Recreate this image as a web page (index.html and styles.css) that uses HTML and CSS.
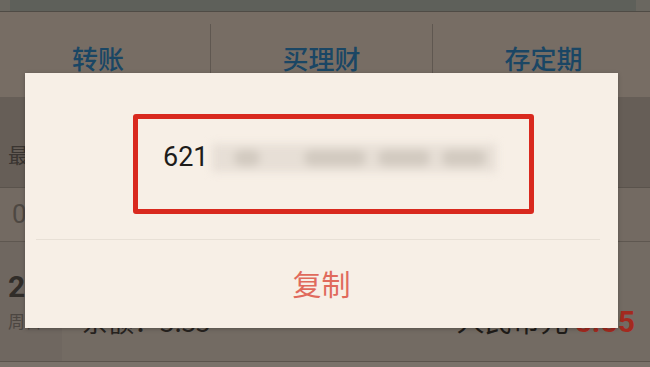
FILE: index.html
```html
<!DOCTYPE html>
<html lang="zh-CN">
<head>
<meta charset="utf-8">
<title>复制卡号</title>
<link rel="stylesheet" href="styles.css">
</head>
<body>
<div class="page">
  <div class="topbar"><div class="topbar-card"></div></div>
  <div class="actions">
    <div class="action">转账</div>
    <div class="action">买理财</div>
    <div class="action">存定期</div>
  </div>
  <div class="list-head">最近交易</div>
  <div class="row-first"><span class="zero">0</span></div>
  <div class="row-item">
    <div class="date">
      <div class="day">28</div>
      <div class="week">周日</div>
    </div>
    <div class="detail">
      <div class="detail-title">支付宝转账</div>
      <div class="detail-line">
        <span class="balance">余额：5.55</span>
        <span class="amount">人民币元 <b class="money">5.55</b></span>
      </div>
    </div>
  </div>
  <div class="bottom"></div>

  <div class="dialog">
    <div class="card-box">
      <span class="card-no">621</span>
      <span class="redact"><i class="b1"></i><i class="b2"></i><i class="b3"></i><i class="b4"></i></span>
    </div>
    <div class="dialog-sep"></div>
    <div class="dialog-btn">复制</div>
  </div>
</div>
</body>
</html>
```

FILE: styles.css
```css
* { box-sizing: border-box; }
html, body { margin: 0; padding: 0; }
body {
  width: 650px;
  height: 367px;
  overflow: hidden;
  background: #746c64;
  font-family: "Noto Sans CJK SC", "Noto Sans", sans-serif;
}
.page {
  position: relative;
  width: 650px;
  height: 367px;
  overflow: hidden;
  display: flex;
  flex-direction: column;
}
.topbar {
  height: 12px;
  background: #6a6760;
  padding: 0 14px 0 10px;
  border-bottom: 1px solid #4f4b45;
}
.topbar-card {
  height: 11px;
  background: #5e605a;
}
.actions {
  height: 85px;
  display: flex;
  background: #776d64;
}
.action {
  flex: 1;
  display: flex;
  align-items: center;
  justify-content: center;
  padding-bottom: 6px;
  margin-top: 12px;
  font-size: 26px;
  font-weight: 500;
  color: #1a4664;
}
.action:first-child { flex: 0 0 210px; padding-right: 14px; }
.action + .action { border-left: 1px solid #5f5750; }
.action:last-child { flex: 0 0 218px; padding-left: 4px; }
.list-head {
  height: 91px;
  background: #665e57;
  border-bottom: 1px solid #5a534c;
  padding: 42px 0 0 8px;
  font-size: 21px;
  line-height: 30px;
  color: #3a3531;
}
.row-first {
  height: 54px;
  background: #736a62;
  border-bottom: 1px solid #5e5750;
  padding: 11px 0 0 12px;
  font-family: Roboto, sans-serif;
  font-size: 26px;
  line-height: 30px;
  color: #4e4842;
}
.row-item {
  height: 120px;
  display: flex;
  background: #736b63;
  border-bottom: 1px solid #5b544d;
}
.date {
  width: 62px;
  background: #6f6760;
  padding: 28px 0 0 8px;
}
.day {
  font-family: Roboto, sans-serif;
  font-weight: 700;
  font-size: 30px;
  line-height: 34px;
  color: #312d29;
}
.week {
  margin-top: 6px;
  font-size: 17px;
  line-height: 22px;
  color: #4c4641;
}
.detail {
  flex: 1;
  padding: 18px 15px 0 20px;
}
.detail-title {
  font-size: 26px;
  line-height: 34px;
  color: #2e2a26;
}
.detail-line {
  margin-top: 8px;
  display: flex;
  justify-content: space-between;
  align-items: baseline;
  line-height: 36px;
}
.balance {
  font-size: 26px;
  color: #27231f;
}
.amount {
  font-size: 28px;
  color: #1f1c19;
}
.money {
  font-family: Roboto, sans-serif;
  font-weight: 700;
  font-size: 30px;
  color: #a32a1f;
}
.bottom {
  flex: 1;
  background: #7a726a;
}

/* dialog overlay */
.dialog {
  position: absolute;
  left: 25px;
  top: 73px;
  width: 593px;
  height: 255px;
  background: #f7efe6;
  box-shadow: 0 1px 4px rgba(0, 0, 0, 0.25);
  display: flex;
  flex-direction: column;
  padding-top: 41px;
}
.card-box {
  margin-left: 108px;
  width: 401px;
  height: 100px;
  border: 5px solid #d9291e;
  border-radius: 3px;
  display: flex;
  align-items: flex-start;
  padding: 22px 0 0 25px;
}
.card-no {
  font-family: Roboto, sans-serif;
  font-size: 27px;
  line-height: 32px;
  color: #1e1c1a;
}
.redact {
  margin: 3px 0 0 3px;
  width: 284px;
  height: 28px;
  background: #e7dfd6;
  filter: blur(4px);
  display: flex;
  align-items: center;
}
.redact i {
  display: block;
  height: 16px;
  background: #d2cac0;
  border-radius: 8px;
}
.redact .b1 { width: 26px; margin-left: 22px; }
.redact .b2 { width: 62px; margin-left: 44px; }
.redact .b3 { width: 52px; margin-left: 12px; }
.redact .b4 { width: 44px; margin-left: 12px; }
.dialog-sep {
  margin: 25px 18px 0 11px;
  height: 1px;
  background: #e8e0d6;
}
.dialog-btn {
  flex: 1;
  display: flex;
  align-items: center;
  justify-content: center;
  padding-bottom: 2px;
  font-size: 29px;
  color: #e06a5c;
}
```
